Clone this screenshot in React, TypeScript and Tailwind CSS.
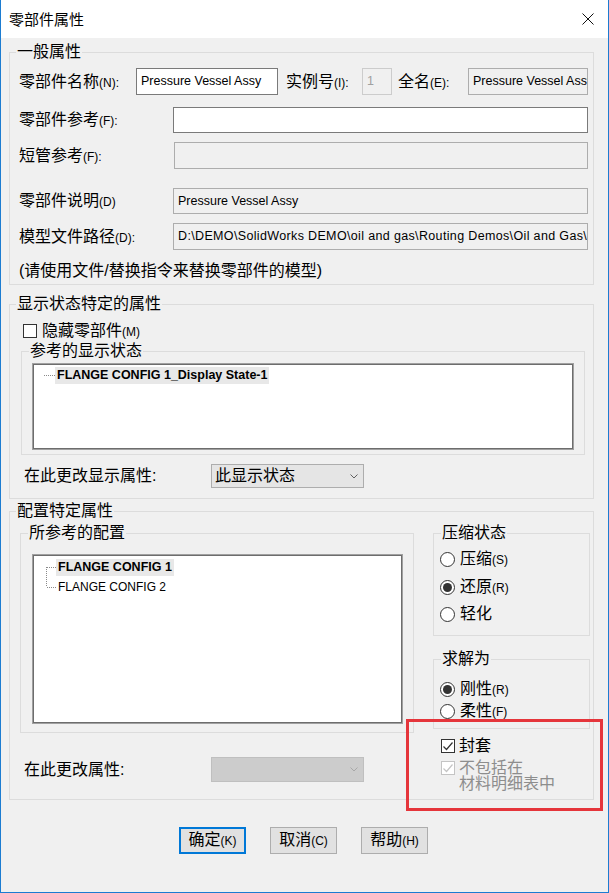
import React from "react";

function L({ t, s, className = "" }: { t: string; s?: string; className?: string }) {
  return (
    <span className={`text-[16px] leading-[20px] whitespace-nowrap ${className}`}>
      {t}
      {s && <span className="text-[12px]">{s}</span>}
    </span>
  );
}

function Group({
  title,
  className = "",
  legendClass = "ml-[6px]",
  children,
}: {
  title: string;
  className?: string;
  legendClass?: string;
  children?: React.ReactNode;
}) {
  return (
    <fieldset className={`border border-[#dcdcdc] min-w-0 ${className}`}>
      <legend className={`px-[1px] text-[16px] leading-[20px] text-black ${legendClass}`}>{title}</legend>
      {children}
    </fieldset>
  );
}

function Box({
  w,
  h,
  kind,
  text,
  textClass = "text-black text-[12.5px]",
}: {
  w: string;
  h: string;
  kind: "on" | "off" | "dim";
  text?: string;
  textClass?: string;
}) {
  const k =
    kind === "on"
      ? "bg-white border-[#7a7a7a]"
      : kind === "off"
      ? "bg-[#f0f0f0] border-[#adadad]"
      : "bg-[#f0f0f0] border-[#cccccc]";
  return (
    <div className={`${w} ${h} border ${k} flex items-center pl-[4px] overflow-hidden shrink-0`}>
      {text && <span className={`whitespace-nowrap ${textClass}`}>{text}</span>}
    </div>
  );
}

function Radio({ checked, t, s }: { checked?: boolean; t: string; s?: string }) {
  return (
    <div className="flex items-center h-[20px]">
      <span className="w-[15px] h-[15px] rounded-full border border-[#333333] bg-white flex items-center justify-center shrink-0">
        {checked && <span className="w-[9px] h-[9px] rounded-full bg-[#333333]" />}
      </span>
      <L t={t} s={s} className="ml-[5px]" />
    </div>
  );
}

function Check({ checked, disabled }: { checked?: boolean; disabled?: boolean }) {
  const c = disabled ? "#c4c4c4" : "#333333";
  return (
    <span
      className={`w-[14px] h-[14px] border ${disabled ? "border-[#c4c4c4]" : "border-[#333333]"} bg-white flex items-center justify-center shrink-0`}
    >
      {checked && (
        <svg width="12" height="12" viewBox="0 0 12 12">
          <polyline points="1.5,6.5 4.5,9.5 10.5,2.5" fill="none" stroke={c} strokeWidth="1.2" />
        </svg>
      )}
    </span>
  );
}

function Chevron({ color }: { color: string }) {
  return (
    <svg width="8" height="5" viewBox="0 0 8 5">
      <polyline points="0.5,0.5 4,4 7.5,0.5" fill="none" stroke={color} strokeWidth="1" />
    </svg>
  );
}

function ListBox({ w, h, children }: { w: string; h: string; children?: React.ReactNode }) {
  return (
    <div className={`${w} ${h} border border-[#a0a0a0] bg-white`}>
      <div className="w-full h-full border border-[#6d6d6d] bg-white">{children}</div>
    </div>
  );
}

function Btn({ t, s, def }: { t: string; s: string; def?: boolean }) {
  return (
    <div
      className={`w-[67px] h-[27px] bg-[#e1e1e1] flex items-center justify-center ${
        def ? "border-2 border-[#0078d7]" : "border border-[#adadad]"
      }`}
    >
      <L t={t} s={s} />
    </div>
  );
}

export default function App() {
  return (
    <div className="relative w-[609px] h-[893px] border-x border-b border-[#1c7cd1] bg-[#f0f0f0] text-black font-['Liberation_Sans','Noto_Sans_CJK_SC',sans-serif] flex flex-col overflow-hidden">
      {/* title bar */}
      <div className="h-[38px] bg-white flex items-center justify-between pl-[8px] pr-[14px] shrink-0">
        <span className="text-[15px] leading-[20px] mt-[1px]">零部件属性</span>
        <svg width="12" height="12" viewBox="0 0 12 12">
          <line x1="0.5" y1="0.5" x2="11.5" y2="11.5" stroke="#111" strokeWidth="1" />
          <line x1="11.5" y1="0.5" x2="0.5" y2="11.5" stroke="#111" strokeWidth="1" />
        </svg>
      </div>

      {/* group 1 */}
      <Group title="一般属性" className="ml-[8px] mt-[4px] w-[585px] pb-[3px]">
        <div className="mt-[6px] h-[27px] flex items-center pl-[9px]">
          <div className="w-[117px]">
            <L t="零部件名称" s="(N):" />
          </div>
          <Box w="w-[142px]" h="h-[27px]" kind="on" text="Pressure Vessel Assy" />
          <div className="ml-[8px] w-[76px]">
            <L t="实例号" s="(I):" />
          </div>
          <Box w="w-[30px]" h="h-[27px]" kind="dim" text="1" textClass="text-[#a0a0a0] text-[12.5px]" />
          <div className="ml-[6px] w-[70px]">
            <L t="全名" s="(E):" />
          </div>
          <Box w="w-[120px]" h="h-[27px]" kind="off" text="Pressure Vessel Assy" />
        </div>
        <div className="mt-[12px] h-[26px] flex items-center pl-[9px]">
          <div className="w-[154px]">
            <L t="零部件参考" s="(F):" />
          </div>
          <Box w="w-[415px]" h="h-[26px]" kind="on" />
        </div>
        <div className="mt-[9px] h-[27px] flex items-center pl-[9px]">
          <div className="w-[155px]">
            <L t="短管参考" s="(F):" />
          </div>
          <Box w="w-[414px]" h="h-[27px]" kind="off" />
        </div>
        <div className="mt-[19px] h-[26px] flex items-center pl-[9px]">
          <div className="w-[154px]">
            <L t="零部件说明" s="(D)" />
          </div>
          <Box w="w-[415px]" h="h-[26px]" kind="off" text="Pressure Vessel Assy" />
        </div>
        <div className="mt-[9px] h-[27px] flex items-center pl-[9px]">
          <div className="w-[154px]">
            <L t="模型文件路径" s="(D):" />
          </div>
          <Box
            w="w-[415px]"
            h="h-[27px]"
            kind="off"
            textClass="text-black text-[12.5px] tracking-[0.35px]"
            text={"D:\\DEMO\\SolidWorks DEMO\\oil and gas\\Routing Demos\\Oil and Gas\\Flange.sldprt"}
          />
        </div>
        <div className="mt-[11px] pl-[9px] h-[20px] flex items-center">
          <span className="text-[16px] leading-[20px] whitespace-nowrap">(请使用文件/替换指令来替换零部件的模型)</span>
        </div>
      </Group>

      {/* group 2 */}
      <Group title="显示状态特定的属性" className="ml-[8px] mt-[9px] w-[585px] pb-[10px]">
        <div className="mt-[7px] h-[20px] flex items-center pl-[13px]">
          <Check />
          <L t="隐藏零部件" s="(M)" className="ml-[5px]" />
        </div>
        <Group title="参考的显示状态" className="ml-[11px] w-[564px] pb-[4px]" legendClass="ml-[7px]">
          <div className="mt-[2px] ml-[10px]">
            <ListBox w="w-[542px]" h="h-[87px]">
              <div className="h-[20px] flex items-center">
                <div className="ml-[10px] w-[11px] border-t border-dotted border-[#8a8a8a]" />
                <span className="h-[17px] px-[2px] bg-[#e8e8e8] text-[12.5px] font-bold leading-[17px] whitespace-nowrap">
                  FLANGE CONFIG 1_Display State-1
                </span>
              </div>
            </ListBox>
          </div>
        </Group>
        <div className="mt-[9px] h-[24px] flex items-center pl-[14px]">
          <div className="w-[187px]">
            <L t="在此更改显示属性:" />
          </div>
          <div className="w-[153px] h-[24px] bg-[#e5e5e5] border border-[#adadad] flex items-center justify-between pl-[3px] pr-[5px]">
            <L t="此显示状态" />
            <Chevron color="#606060" />
          </div>
        </div>
      </Group>

      {/* group 3 */}
      <Group title="配置特定属性" className="ml-[8px] mt-[2px] w-[585px] pb-[17px]">
        <div className="flex h-[261px]">
          <div className="ml-[10px] flex flex-col">
            <Group title="所参考的配置" className="mt-[2px] w-[394px] pb-[8px]" legendClass="ml-[7px]">
              <div className="mt-[11px] ml-[11px]">
                <ListBox w="w-[371px]" h="h-[170px]">
                  <div className="mt-[1px] h-[20px] flex items-center">
                    <svg width="22" height="20" viewBox="0 0 22 20" className="shrink-0">
                      <line x1="12.5" y1="10" x2="12.5" y2="20" stroke="#8a8a8a" strokeDasharray="1 1" />
                      <line x1="13" y1="10.5" x2="22" y2="10.5" stroke="#8a8a8a" strokeDasharray="1 1" />
                    </svg>
                    <span className="h-[17px] px-[2px] bg-[#e8e8e8] text-[12.5px] font-bold leading-[17px] whitespace-nowrap">
                      FLANGE CONFIG 1
                    </span>
                  </div>
                  <div className="h-[20px] flex items-center">
                    <svg width="22" height="20" viewBox="0 0 22 20" className="shrink-0">
                      <line x1="12.5" y1="0" x2="12.5" y2="10" stroke="#8a8a8a" strokeDasharray="1 1" />
                      <line x1="13" y1="10.5" x2="22" y2="10.5" stroke="#8a8a8a" strokeDasharray="1 1" />
                    </svg>
                    <span className="px-[2px] text-[12px] leading-[17px] whitespace-nowrap">FLANGE CONFIG 2</span>
                  </div>
                </ListBox>
              </div>
            </Group>
            <div className="mt-[24px] h-[25px] flex items-center pl-[4px]">
              <div className="w-[187px]">
                <L t="在此更改属性:" />
              </div>
              <div className="w-[153px] h-[25px] bg-[#cccccc] border border-[#bfbfbf] flex items-center justify-end pr-[5px]">
                <Chevron color="#a8a8a8" />
              </div>
            </div>
          </div>

          <div className="ml-[19px] w-[157px] flex flex-col">
            <Group title="压缩状态" className="mt-[2px] w-[157px] pb-[11px]" legendClass="ml-[7px]">
              <div className="pl-[6px]">
                <div className="mt-[6px]">
                  <Radio t="压缩" s="(S)" />
                </div>
                <div className="mt-[8px]">
                  <Radio t="还原" s="(R)" checked />
                </div>
                <div className="mt-[7px]">
                  <Radio t="轻化" />
                </div>
              </div>
            </Group>
            <Group title="求解为" className="mt-[13px] w-[157px] pb-[7px]" legendClass="ml-[7px]">
              <div className="pl-[6px]">
                <div className="mt-[10px]">
                  <Radio t="刚性" s="(R)" checked />
                </div>
                <div className="mt-[2px]">
                  <Radio t="柔性" s="(F)" />
                </div>
              </div>
            </Group>
            <div className="mt-[7px] h-[20px] flex items-center pl-[8px] shrink-0">
              <Check checked />
              <L t="封套" className="ml-[4px]" />
            </div>
            <div className="mt-[4px] flex items-start pl-[8px] shrink-0">
              <div className="mt-[1px]">
                <Check checked disabled />
              </div>
              <div className="ml-[4px] flex flex-col text-[16px] leading-[16px] text-[#8d8d8d]">
                <span>不包括在</span>
                <span>材料明细表中</span>
              </div>
            </div>
          </div>
        </div>
      </Group>

      {/* buttons */}
      <div className="mt-[27px] ml-[178px] flex gap-[24px]">
        <Btn t="确定" s="(K)" def />
        <Btn t="取消" s="(C)" />
        <Btn t="帮助" s="(H)" />
      </div>

      {/* red annotation */}
      <div className="absolute left-[405px] top-[719px] w-[197px] h-[92px] border-[3px] border-[#e5353b]" />
    </div>
  );
}
